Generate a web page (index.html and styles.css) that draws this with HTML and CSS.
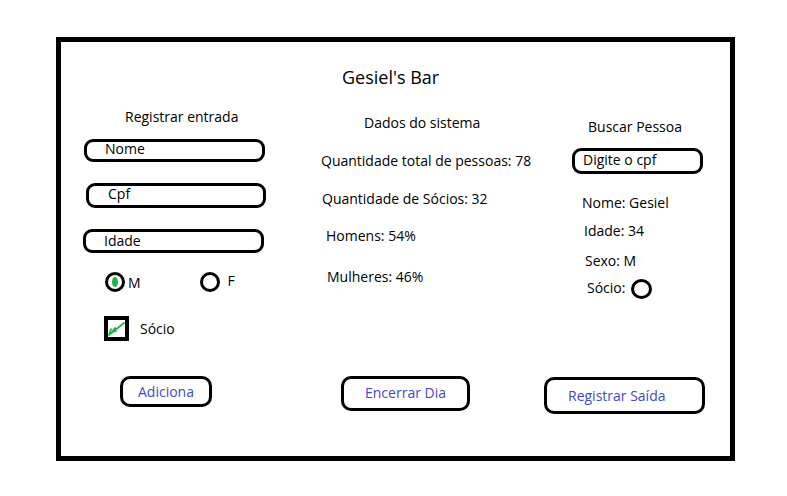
FILE: index.html
```html
<!DOCTYPE html>
<html lang="pt">
<head>
<meta charset="utf-8">
<title>Gesiel's Bar</title>
<link rel="stylesheet" href="styles.css">
</head>
<body>
<div class="frame">
  <h1 class="title">Gesiel's Bar</h1>
  <div class="columns">
    <section class="col col-left">
      <h2 class="heading h-reg">Registrar entrada</h2>
      <div class="field f-nome">Nome</div>
      <div class="field f-cpf">Cpf</div>
      <div class="field f-idade">Idade</div>
      <div class="radios">
        <span class="radio radio-m checked"><span class="dot"></span></span>
        <span class="radio-label lab-m">M</span>
        <span class="radio radio-f"></span>
        <span class="radio-label lab-f">F</span>
      </div>
      <div class="check-row">
        <span class="checkbox">
          <svg viewBox="0 0 17 17" width="17" height="17"><path d="M1 15 L16 3 M1 15 L3 9 M1 15 L5 11 M2 13 L8 11 M4 12 L7 8" fill="none" stroke="#22b14c" stroke-width="1.7" stroke-linecap="round"/></svg>
        </span>
        <span class="check-label">Sócio</span>
      </div>
    </section>
    <section class="col col-mid">
      <h2 class="heading h-dados">Dados do sistema</h2>
      <p class="stat s1">Quantidade total de pessoas: 78</p>
      <p class="stat s2">Quantidade de Sócios: 32</p>
      <p class="stat s3">Homens: 54%</p>
      <p class="stat s4">Mulheres: 46%</p>
    </section>
    <section class="col col-right">
      <h2 class="heading h-buscar">Buscar Pessoa</h2>
      <div class="field f-busca">Digite o cpf</div>
      <p class="stat r1">Nome: Gesiel</p>
      <p class="stat r2">Idade: 34</p>
      <p class="stat r3">Sexo: M</p>
      <div class="socio-row">
        <span class="stat-inline">Sócio:</span>
        <span class="radio radio-socio"></span>
      </div>
    </section>
  </div>
  <div class="buttons">
    <div class="btn b-add">Adiciona</div>
    <div class="btn b-end">Encerrar Dia</div>
    <div class="btn b-out">Registrar Saída</div>
  </div>
</div>
</body>
</html>
```

FILE: styles.css
```css
html, body {
  margin: 0;
  padding: 0;
  background: #fff;
}
body {
  font-family: "Open Sans", "Noto Sans", "Liberation Sans", sans-serif;
  font-size: 14px;
  color: #000;
}
.frame {
  margin: 37px 0 0 56px;
  width: 679px;
  height: 424px;
  box-sizing: border-box;
  border: 5px solid #000;
  display: flex;
  flex-direction: column;
}
.title {
  margin: 24px 0 0 0;
  padding-left: 281px;
  font-size: 18px;
  font-weight: 400;
  line-height: 22px;
  height: 22px;
}
.columns {
  display: grid;
  grid-template-columns: 244px 240px 1fr;
  height: 276px;
  margin-top: 12px;
}
/* columns start at y = 100 */
.col {
  display: flex;
  flex-direction: column;
  align-items: flex-start;
}
.heading {
  font-size: 14px;
  font-weight: 400;
  line-height: 20px;
  margin: 0;
}
.stat {
  margin: 0;
  line-height: 20px;
}
.field {
  box-sizing: border-box;
  border: 3px solid #000;
  border-radius: 9px;
  display: flex;
  align-items: center;
  line-height: 18px;
}
.h-reg { margin: 7px 0 0 64px; }
.f-nome { margin: 12px 0 0 23px; width: 181px; height: 23px; padding: 0 0 3px 18px; }
.f-cpf { margin: 21px 0 0 25px; width: 180px; height: 25px; padding: 0 0 3px 19px; }
.f-idade { margin: 21px 0 0 22px; width: 181px; height: 24px; padding: 0 0 0 18px; }

.radios {
  display: flex;
  align-items: center;
  margin: 19px 0 0 44px;
  height: 20px;
}
.radio {
  box-sizing: border-box;
  width: 20px;
  height: 20px;
  border: 3px solid #000;
  border-radius: 50%;
  display: flex;
  align-items: center;
  justify-content: center;
  flex: none;
}
.dot {
  width: 6px;
  height: 10px;
  border-radius: 50%;
  background: #22b14c;
}
.lab-m { margin-left: 3px; color: #000; }
.radio-f { margin-left: 59px; }
.lab-f { margin-left: 8px; margin-top: -3px; }

.check-row {
  display: flex;
  align-items: center;
  margin: 24px 0 0 43px;
}
.checkbox {
  box-sizing: border-box;
  width: 25px;
  height: 25px;
  border: 4px solid #000;
  display: flex;
  align-items: center;
  justify-content: center;
}
.checkbox svg { display: block; }
.check-label { margin-left: 11px; }

.h-dados { margin: 13px 0 0 59px; }
.s1 { margin: 18px 0 0 16px; }
.s2 { margin: 18px 0 0 17px; }
.s3 { margin: 17px 0 0 21px; }
.s4 { margin: 21px 0 0 22px; }

.h-buscar { margin: 17px 0 0 43px; }
.f-busca { margin: 11px 0 0 27px; width: 131px; height: 26px; padding: 0 0 2px 8px; }
.r1 { margin: 19px 0 0 37px; }
.r2 { margin: 8px 0 0 39px; }
.r3 { margin: 10px 0 0 40px; }
.socio-row {
  display: flex;
  align-items: center;
  margin: 6px 0 0 42px;
  height: 20px;
}
.radio-socio { width: 21px; height: 20px; margin: 3px 0 0 6px; }

.buttons {
  display: flex;
  align-items: flex-start;
}
.btn {
  box-sizing: border-box;
  border: 3px solid #000;
  border-radius: 10px;
  color: #3f48cc;
  display: flex;
  align-items: center;
  justify-content: center;
  line-height: 18px;
}
.b-add { margin-left: 59px; width: 92px; height: 31px; }
.b-end { margin-left: 129px; width: 129px; height: 35px; padding-bottom: 1px; }
.b-out { margin: 1px 0 0 74px; width: 161px; height: 37px; justify-content: flex-start; padding: 0 0 0 21px; }
```
